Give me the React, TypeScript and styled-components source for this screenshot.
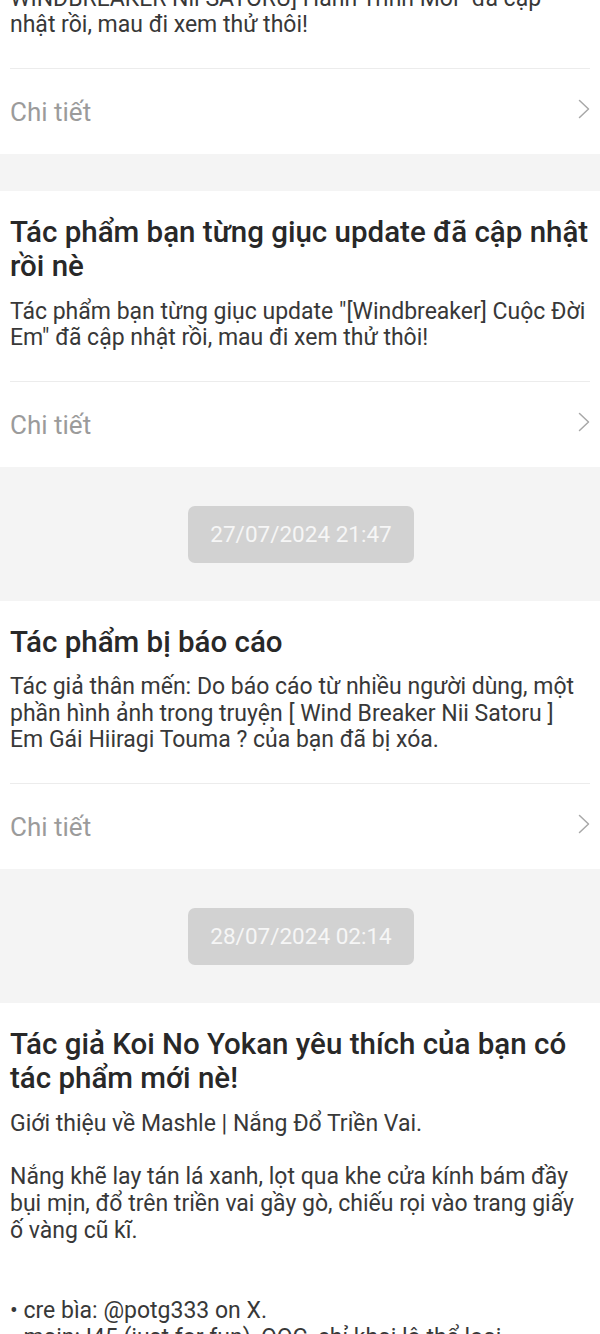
import React from "react";
import styled, { createGlobalStyle } from "styled-components";

const GlobalStyle = createGlobalStyle`
  html, body {
    margin: 0;
    padding: 0;
    background: #f4f4f4;
    font-family: Roboto, "Noto Sans", "Liberation Sans", sans-serif;
    -webkit-font-smoothing: antialiased;
  }
  * { box-sizing: border-box; }
`;

const Feed = styled.div`
  width: 600px;
  height: 1334px;
  overflow: hidden;
  display: flex;
  flex-direction: column;
`;

const Inner = styled.div`
  display: flex;
  flex-direction: column;
  margin-top: -14.4px;
`;

const Card = styled.section<{ $clipped?: boolean }>`
  background: #ffffff;
  padding: ${(p) => (p.$clipped ? "0 10px" : "23.5px 10px 0")};
  display: flex;
  flex-direction: column;
`;

const Title = styled.h2`
  margin: 0;
  font-size: 29.5px;
  line-height: 34.5px;
  font-weight: 500;
  color: #282828;
`;

const Body = styled.p<{ $first?: boolean }>`
  margin: ${(p) => (p.$first ? "0" : "14.8px")} 0 0;
  font-size: 23px;
  line-height: 26.8px;
  font-weight: 400;
  color: #383838;
  white-space: pre-line;
`;

const Footer = styled.div`
  margin-top: 29px;
  border-top: 1px solid #ececec;
  height: 86px;
  display: flex;
  align-items: center;
  justify-content: space-between;
`;

const DetailLabel = styled.span`
  font-size: 26px;
  color: #9b9b9b;
  font-weight: 400;
`;

const Chevron = styled.svg`
  width: 12px;
  height: 20px;
  margin-bottom: 6px;
`;

const Spacer = styled.div`
  height: 37px;
`;

const DateSection = styled.div`
  height: 134px;
  display: flex;
  align-items: center;
  justify-content: center;
`;

const DatePill = styled.div`
  width: 226px;
  height: 57px;
  border-radius: 7px;
  background: #d2d2d2;
  color: #f6f6f6;
  font-size: 22.5px;
  display: flex;
  align-items: center;
  justify-content: center;
  margin-left: 2px;
`;

const Detail = () => (
  <Footer>
    <DetailLabel>Chi tiết</DetailLabel>
    <Chevron viewBox="0 0 12 20" aria-hidden>
      <polyline
        points="1.5,1.5 10.5,10 1.5,18.5"
        fill="none"
        stroke="#a8a8a8"
        strokeWidth="1.5"
        strokeLinecap="round"
        strokeLinejoin="round"
      />
    </Chevron>
  </Footer>
);

export default function App() {
  return (
    <>
      <GlobalStyle />
      <Feed>
        <Inner>
          <Card $clipped>
            <Body $first>
              {'WINDBREAKER Nii SATORU] Hành Trình Mới" đã cập'}
              <br />
              {"nhật rồi, mau đi xem thử thôi!"}
            </Body>
            <Detail />
          </Card>

          <Spacer />

          <Card>
            <Title>Tác phẩm bạn từng giục update đã cập nhật rồi nè</Title>
            <Body>
              {'Tác phẩm bạn từng giục update "[Windbreaker] Cuộc Đời Em" đã cập nhật rồi, mau đi xem thử thôi!'}
            </Body>
            <Detail />
          </Card>

          <DateSection>
            <DatePill>27/07/2024 21:47</DatePill>
          </DateSection>

          <Card>
            <Title>Tác phẩm bị báo cáo</Title>
            <Body>
              Tác giả thân mến: Do báo cáo từ nhiều người dùng, một phần hình ảnh trong truyện [ Wind Breaker Nii Satoru ] Em Gái Hiiragi Touma ? của bạn đã bị xóa.
            </Body>
            <Detail />
          </Card>

          <DateSection>
            <DatePill>28/07/2024 02:14</DatePill>
          </DateSection>

          <Card>
            <Title>Tác giả Koi No Yokan yêu thích của bạn có tác phẩm mới nè!</Title>
            <Body>
              {"Giới thiệu về Mashle | Nắng Đổ Triền Vai.\n\nNắng khẽ lay tán lá xanh, lọt qua khe cửa kính bám đầy bụi mịn, đổ trên triền vai gầy gò, chiếu rọi vào trang giấy ố vàng cũ kĩ.\n\n\n• cre bìa: @potg333 on X.\n• main: I45 (just for fun), OOC, chỉ khai lộ thể loại."}
            </Body>
            <Detail />
          </Card>
        </Inner>
      </Feed>
    </>
  );
}
